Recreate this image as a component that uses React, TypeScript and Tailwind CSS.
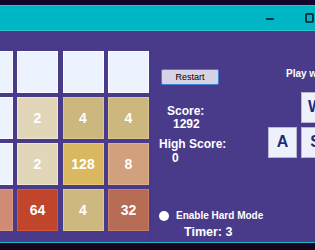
import React from 'react'

type Tile = { v?: number; bg: string; bd: string }

const E: Tile = { bg: 'bg-[#edf3fe]', bd: 'border-[#f8fbff]' }

const rows: Tile[][] = [
  [E, E, E, E],
  [
    E,
    { v: 2, bg: 'bg-[#e2d6b9]', bd: 'border-[#efe6cf]' },
    { v: 4, bg: 'bg-[#ccb77f]', bd: 'border-[#dcc68c]' },
    { v: 4, bg: 'bg-[#ccb77f]', bd: 'border-[#dcc68c]' },
  ],
  [
    E,
    { v: 2, bg: 'bg-[#e2d6b9]', bd: 'border-[#efe6cf]' },
    { v: 128, bg: 'bg-[#dab85f]', bd: 'border-[#e9ca70]' },
    { v: 8, bg: 'bg-[#d1a07c]', bd: 'border-[#deb08b]' },
  ],
  [
    { bg: 'bg-[#cf8b74]', bd: 'border-[#dc9a82]' },
    { v: 64, bg: 'bg-[#c1452a]', bd: 'border-[#cf5a3b]' },
    { v: 4, bg: 'bg-[#cdb980]', bd: 'border-[#ddc98f]' },
    { v: 32, bg: 'bg-[#b66c55]', bd: 'border-[#c67f66]' },
  ],
]

function KeyBox({ k }: { k: string }) {
  return (
    <div className="w-[29px] h-[31px] bg-[#eef0fb] border border-[#b9b6cf] flex items-center justify-center text-[16px] font-bold text-[#1f2a78] leading-none">
      {k}
    </div>
  )
}

export default function App() {
  return (
    <div
      className="w-[315px] h-[250px] overflow-hidden bg-[#10041f] flex flex-col"
      style={{ fontFamily: '"Liberation Sans", Arial, sans-serif' }}
    >
      {/* Window top edge */}
      <div className="h-[5px] bg-[#14062a] shrink-0" />

      {/* Title bar */}
      <div className="h-[26px] shrink-0 bg-[#00b6c4] border-t border-b border-[#2ac4cf] flex items-center justify-end">
        <div className="flex-none w-[8px] h-[2px] bg-[#0b3a44] mt-[2px] mr-[31px]" />
        <div className="flex-none w-[9px] h-[10px] border-2 border-[#083540] rounded-[2px] mr-[1px]" />
      </div>

      {/* Body */}
      <div className="h-[211px] shrink-0 bg-[#493b8a] flex text-white font-bold">
        {/* Board */}
        <div className="ml-[-28.5px] mt-[20px] flex flex-col gap-[4px] shrink-0 border-r border-[#45378a] pr-[1px]">
          {rows.map((r, i) => (
            <div key={i} className="flex gap-[4.5px]">
              {r.map((t, j) => (
                <div
                  key={j}
                  className={`w-[41px] h-[42px] border ${t.bg} ${t.bd} flex items-center justify-center text-[14px] font-bold text-white leading-none`}
                >
                  {t.v}
                </div>
              ))}
            </div>
          ))}
        </div>

        {/* Info column */}
        <div className="w-[109px] ml-[8px] shrink-0 flex flex-col">
          <button className="mt-[38px] ml-[2px] w-[58px] h-[16px] bg-[#d6d3e6] border border-[#3f7fd6] rounded-[2px] text-black font-normal text-[9px] leading-none flex items-center justify-center">
            Restart
          </button>
          <div className="mt-[19.5px] ml-[8px] text-[12px] leading-none">Score:</div>
          <div className="mt-[1px] ml-[14px] text-[12px] leading-none">1292</div>
          <div className="mt-[8px] ml-[0px] text-[12px] leading-none">High Score:</div>
          <div className="mt-[2px] ml-[13px] text-[12px] leading-none">0</div>
          <div className="mt-[47px] flex items-center">
            <div className="w-[10px] h-[10px] rounded-full bg-white" />
            <div className="ml-[7px] text-[10px] leading-none">Enable Hard Mode</div>
          </div>
          <div className="mt-[5px] ml-[25px] text-[12.5px] leading-none">Timer: 3</div>
        </div>

        {/* Controls column */}
        <div className="flex flex-col shrink-0">
          <div className="mt-[37.5px] ml-[18px] text-[10px] leading-none whitespace-nowrap">Play with</div>
          <div className="mt-[13px] grid grid-cols-[29px_29px] gap-x-[4px] gap-y-[4px]">
            <div />
            <KeyBox k="W" />
            <KeyBox k="A" />
            <KeyBox k="S" />
          </div>
        </div>
      </div>

      {/* Bottom edge */}
      <div className="h-[1px] bg-[#1fb5c9] shrink-0" />
    </div>
  )
}
